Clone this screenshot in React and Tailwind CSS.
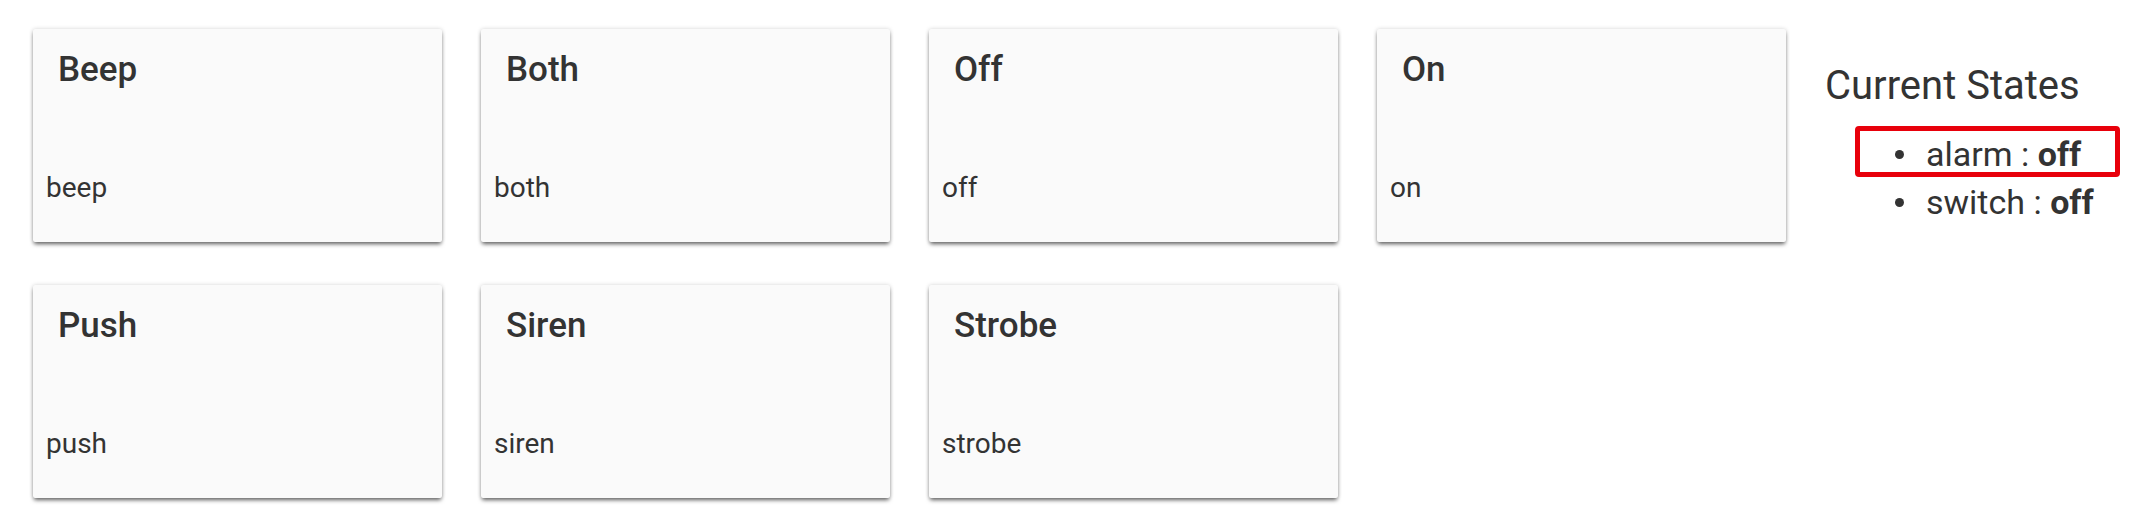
import React from "react";

const cards = [
  ["Beep", "beep"],
  ["Both", "both"],
  ["Off", "off"],
  ["On", "on"],
  ["Push", "push"],
  ["Siren", "siren"],
  ["Strobe", "strobe"],
];

function Card({ title, value }) {
  return (
    <div className="h-[213px] bg-[#fafafa] rounded-[2px] shadow-[0_3px_4px_-1px_rgba(0,0,0,0.6),0_0_4px_0_rgba(0,0,0,0.16)] flex flex-col">
      <div className="pt-[20px] pl-[25px] text-[35px] leading-[42px] font-medium text-[#333]">
        {title}
      </div>
      <div className="mt-[81px] pl-[13px] text-[28px] leading-[32px] text-[#333]">
        {value}
      </div>
    </div>
  );
}

export default function App() {
  return (
    <div
      className="w-[2135px] h-[524px] bg-white flex items-start pl-[33px] pt-[29px]"
      style={{ fontFamily: "Roboto, 'Noto Sans', sans-serif" }}
    >
      <div className="grid grid-cols-[repeat(4,409px)] gap-x-[39px] gap-y-[43px]">
        {cards.map(([t, v]) => (
          <Card key={t} title={t} value={v} />
        ))}
      </div>
      <div className="ml-[39px] pt-[33px] text-[#333]">
        <div className="text-[40px] leading-[48px]">Current States</div>
        <div className="relative mt-[20px]">
          <div className="absolute left-[30px] top-[-4px] w-[265px] h-[51px] border-[5px] border-[#e8000b] rounded-[4px]" />
          <ul className="pl-[70px]">
            <li className="flex items-center text-[34px] leading-[48px]">
              <span className="w-[9px] h-[9px] rounded-full bg-[#333] shrink-0" />
              <span className="ml-[22px]">
                alarm : <span className="font-bold">off</span>
              </span>
            </li>
            <li className="flex items-center text-[34px] leading-[48px]">
              <span className="w-[9px] h-[9px] rounded-full bg-[#333] shrink-0" />
              <span className="ml-[22px]">
                switch : <span className="font-bold">off</span>
              </span>
            </li>
          </ul>
        </div>
      </div>
    </div>
  );
}
